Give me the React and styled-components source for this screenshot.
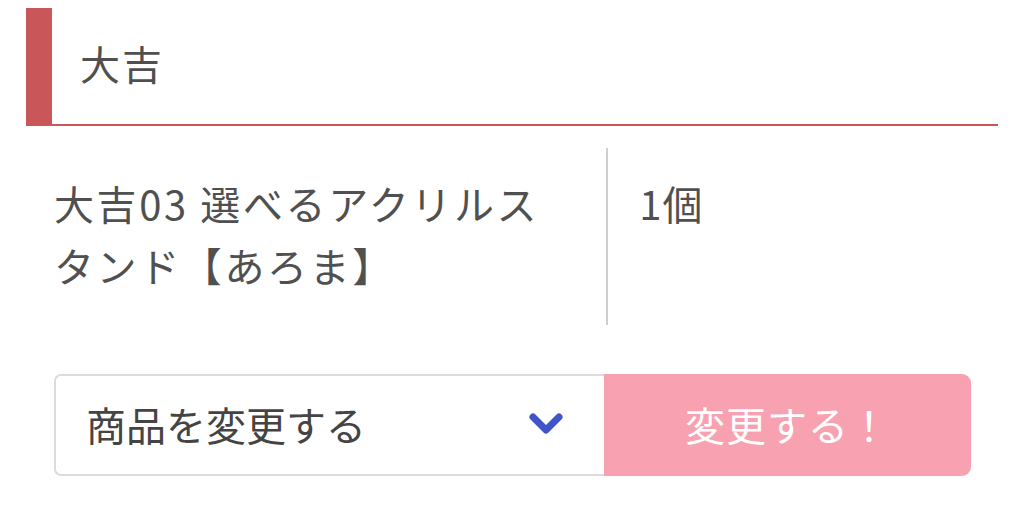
import React from 'react';
import styled, { createGlobalStyle } from 'styled-components';

const GlobalStyle = createGlobalStyle`
  body {
    margin: 0;
    background: #fff;
    font-family: "Noto Sans CJK JP", "Noto Sans", sans-serif;
    color: #505050;
  }
`;

const Page = styled.div`
  padding: 8px 26px 0 26px;
  width: 972px;
`;

const Heading = styled.h2`
  margin: 0;
  height: 110px;
  display: flex;
  align-items: center;
  padding: 0 0 6px 28px;
  border-left: 26px solid #c95658;
  border-bottom: 2px solid #c95658;
  font-size: 40px;
  font-weight: 400;
  letter-spacing: 2px;
  color: #505050;
`;

const Body = styled.div`
  padding: 22px 27px 0 28px;
`;

const ItemRow = styled.div`
  display: grid;
  grid-template-columns: 60% 40%;
`;

const Cell = styled.div`
  padding: ${(p) => (p.$side ? '24px 0 29px 31px' : '24px 40px 29px 0')};
  font-size: 40px;
  line-height: 62px;
  letter-spacing: ${(p) => (p.$side ? '1px' : '2.6px')};
  border-left: ${(p) => (p.$side ? '2px solid #cfcfcf' : 'none')};
  margin-left: ${(p) => (p.$side ? '2px' : '0')};
`;

const Controls = styled.div`
  display: grid;
  grid-template-columns: 60% 40%;
  margin-top: 49px;
  height: 102px;
`;

const Select = styled.div`
  display: flex;
  align-items: center;
  justify-content: space-between;
  padding: 0 40px 2px 30px;
  border: 2px solid #dcdcdc;
  border-right: none;
  border-radius: 7px 0 0 7px;
  font-size: 40px;
  color: #444;
`;

const Submit = styled.button`
  padding: 0 0 2px 0;
  border: none;
  border-radius: 0 9px 9px 0;
  background: #f7a1b1;
  color: #fff;
  font-family: inherit;
  font-size: 40px;
  letter-spacing: 1px;
  cursor: pointer;
`;

const Chevron = () => (
  <svg width="36" height="24" viewBox="0 0 36 24">
    <polyline
      points="5,5 18,18 31,5"
      fill="none"
      stroke="#3f55c9"
      strokeWidth="7"
      strokeLinecap="round"
      strokeLinejoin="round"
    />
  </svg>
);

export default function App() {
  return (
    <>
      <GlobalStyle />
      <Page>
        <Heading>大吉</Heading>
        <Body>
          <ItemRow>
            <Cell>大吉03 選べるアクリルスタンド【あろま】</Cell>
            <Cell $side>1個</Cell>
          </ItemRow>
          <Controls>
            <Select>
              <span>商品を変更する</span>
              <Chevron />
            </Select>
            <Submit>変更する！</Submit>
          </Controls>
        </Body>
      </Page>
    </>
  );
}
